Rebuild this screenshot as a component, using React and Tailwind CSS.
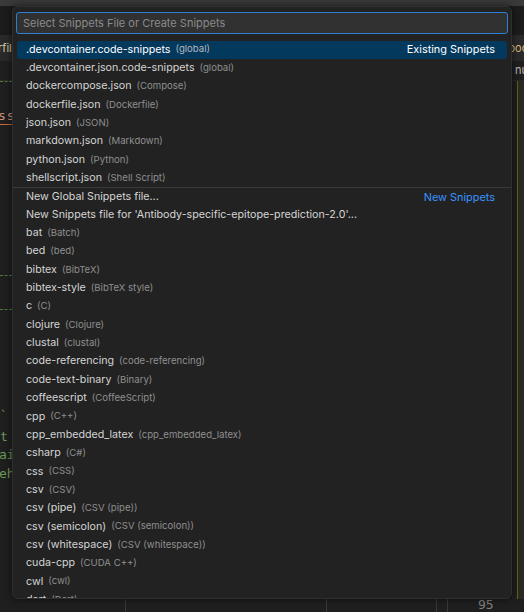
const existing = [
  { label: '.devcontainer.code-snippets', desc: '(global)' },
  { label: '.devcontainer.json.code-snippets', desc: '(global)' },
  { label: 'dockercompose.json', desc: '(Compose)' },
  { label: 'dockerfile.json', desc: '(Dockerfile)' },
  { label: 'json.json', desc: '(JSON)' },
  { label: 'markdown.json', desc: '(Markdown)' },
  { label: 'python.json', desc: '(Python)' },
  { label: 'shellscript.json', desc: '(Shell Script)' },
];

const languages = [
  ['bat', '(Batch)'],
  ['bed', '(bed)'],
  ['bibtex', '(BibTeX)'],
  ['bibtex-style', '(BibTeX style)'],
  ['c', '(C)'],
  ['clojure', '(Clojure)'],
  ['clustal', '(clustal)'],
  ['code-referencing', '(code-referencing)'],
  ['code-text-binary', '(Binary)'],
  ['coffeescript', '(CoffeeScript)'],
  ['cpp', '(C++)'],
  ['cpp_embedded_latex', '(cpp_embedded_latex)'],
  ['csharp', '(C#)'],
  ['css', '(CSS)'],
  ['csv', '(CSV)'],
  ['csv (pipe)', '(CSV (pipe))'],
  ['csv (semicolon)', '(CSV (semicolon))'],
  ['csv (whitespace)', '(CSV (whitespace))'],
  ['cuda-cpp', '(CUDA C++)'],
  ['cwl', '(cwl)'],
  ['dart', '(Dart)'],
];

function Row({ label, desc, selected, right, rightBlue, separator }) {
  return (
    <div className={`h-[18.35px] shrink-0 ${separator ? 'border-t border-[#3a3a3a]' : ''}`}>
      <div
        className={`h-full flex items-center mx-[4px] pl-[9px] pr-[12px] rounded-[3px] ${
          selected ? 'bg-[#04395e]' : ''
        }`}
      >
        <span className={`text-[10.7px] whitespace-nowrap ${selected ? 'text-white' : 'text-[#d4d4d4]'}`}>
          {label}
        </span>
        {desc && (
          <span className={`ml-[5px] text-[9.6px] whitespace-nowrap ${selected ? 'text-[#b3b8bd]' : 'text-[#8f8f8f]'}`}>
            {desc}
          </span>
        )}
        <div className="flex-1" />
        {right && (
          <span className={`text-[10.9px] whitespace-nowrap ${rightBlue ? 'text-[#3794ff]' : 'text-white'}`}>
            {right}
          </span>
        )}
      </div>
    </div>
  );
}

function EditorBackdrop() {
  return (
    <div className="w-full h-full flex flex-col bg-[#1f1f1f]">
      <div className="h-[6px] bg-[#3a3a3a]" />
      <div className="h-[29px] bg-[#1c1c1c]" />
      <div className="h-[26px] bg-[#2a2a2a] flex items-center justify-between text-[11px]">
        <span className="text-[#d7c9a8] -ml-[2px]">rfil</span>
        <span className="text-[#d7ba7d] mr-[-4px]">ooc</span>
      </div>
      <div className="h-[20px] bg-[#1f1f1f] flex items-center justify-end text-[11px] text-[#bbbbbb] border-b border-[#2a2a2a]">
        <span className="mr-[-4px]">nu</span>
      </div>
      <div className="flex-1 flex">
        <div className="w-[12px] flex flex-col font-['DejaVu_Sans_Mono',monospace] text-[13px] leading-none">
          <div className="h-[1px] border-t border-dashed border-[#4e7a3a]" />
          <div className="mt-[27px] text-[#ce9178] border-b border-[#c86a3a] pb-[2px] -ml-[2px] tracking-[1px]">ss</div>
          <div className="mt-[150px] h-[1px] border-t border-dashed border-[#4e7a3a]" />
          <div className="mt-[33px] h-[1px] border-t border-dashed border-[#4e7a3a]" />
          <div className="mt-[100px] text-[#6a9955] text-[12px]">`</div>
          <div className="mt-[8px] text-[#6a9955]">t</div>
          <div className="mt-[5px] text-[#6a9955] -ml-[1px]">ai</div>
          <div className="mt-[6px] text-[#6a9955] -ml-[1px]">eh</div>
        </div>
        <div className="flex-1" />
        <div className="w-[6px] border-l border-[#171717]" />
        <div className="w-[1px] bg-[#6b5f1e]" />
        <div className="w-[6px] bg-[#2a2a22]" />
      </div>
      <div className="h-[13px] flex items-end text-[13px] text-[#858585] font-['DejaVu_Sans_Mono',monospace] leading-none">
        <div className="w-[126px] h-full border-r border-[#3a3a3a]" />
        <div className="w-[201px] h-full border-r border-[#3a3a3a]" />
        <div className="w-[110px] h-full border-r border-[#3a3a3a]" />
        <div className="w-[11px] h-full border-r border-[#3a3a3a]" />
        <span className="ml-[30px] mb-[1px]">95</span>
      </div>
    </div>
  );
}

export default function App() {
  return (
    <div className="relative w-[524px] h-[612px] overflow-hidden font-['Inter','Noto_Sans',sans-serif]">
      <EditorBackdrop />
      <div className="absolute left-[12px] top-[6px] w-[500px] h-[593px] bg-[#222222] rounded-[6px] border border-[#2f2f2f] shadow-[0_0_8px_rgba(0,0,0,0.6)] overflow-hidden flex flex-col">
        <div className="px-[3px] pt-[5px]">
          <div className="h-[22px] rounded-[3px] border border-[#2d7fd3] bg-[#313131] flex items-center pl-[6px] text-[11px] text-[#8b8b8b]">
            Select Snippets File or Create Snippets
          </div>
        </div>
        <div className="mt-[6.5px] flex flex-col">
          {existing.map((r, i) => (
            <Row
              key={r.label}
              label={r.label}
              desc={r.desc}
              selected={i === 0}
              right={i === 0 ? 'Existing Snippets' : null}
            />
          ))}
          <Row label="New Global Snippets file..." right="New Snippets" rightBlue separator />
          <Row label="New Snippets file for 'Antibody-specific-epitope-prediction-2.0'..." />
          {languages.map(([l, d]) => (
            <Row key={l} label={l} desc={d} />
          ))}
        </div>
      </div>
    </div>
  );
}
